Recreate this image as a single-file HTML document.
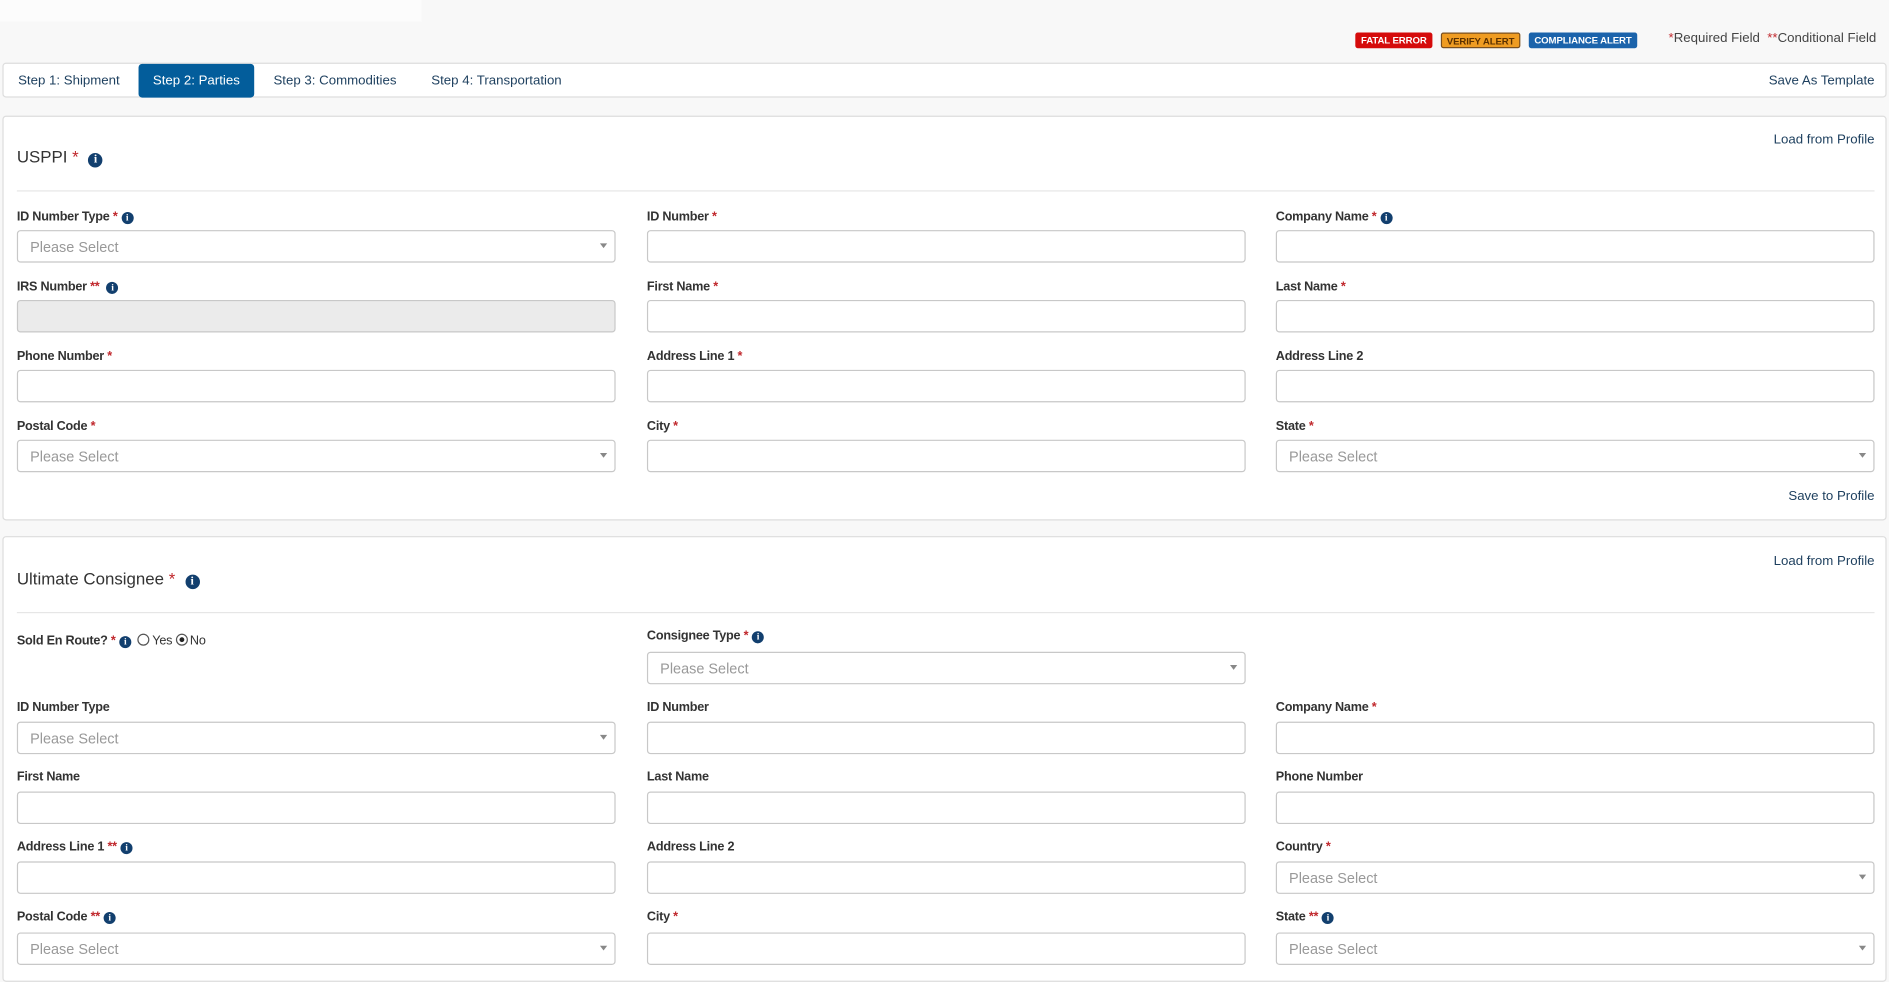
<!DOCTYPE html>
<html><head><meta charset="utf-8"><style>
html,body{margin:0;padding:0;background:#f8f8f8;overflow:hidden}
#w{position:absolute;left:0;top:0;width:1568px;height:803px;transform:scale(1.20472);transform-origin:0 0;font-family:"Liberation Sans",sans-serif;color:#333}
.a{position:absolute}
.badge{position:absolute;top:27px;height:13px;font-size:8px;font-weight:bold;color:#fff;line-height:13px;text-align:center;border-radius:2px;letter-spacing:-.1px}
.tabs{position:absolute;left:2px;top:52px;width:1564px;height:29px;background:#fff;border:1px solid #ddd;border-radius:3px;box-sizing:border-box}
.tab{position:absolute;top:0;height:28px;line-height:28px;font-size:11px;color:#1d3f5e}
.panel{position:absolute;left:2px;width:1564px;background:#fff;border:1px solid #ddd;border-radius:3px;box-sizing:border-box}
.lnk{position:absolute;right:9px;font-size:11px;color:#1d3f5e}
.title{position:absolute;left:11px;font-size:14px;color:#333}
.hr{position:absolute;left:11px;right:9px;height:1px;background:#e6e6e6}
.r{color:#c0282d}
.lb{position:absolute;font-size:10.5px;font-weight:bold;color:#333;letter-spacing:-.2px;white-space:nowrap}
.in{position:absolute;width:497px;height:27px;border:1px solid #c8c8c8;border-radius:3px;box-sizing:border-box;background:#fff}
.in.g{background:#ebebeb}
.in .ph{position:absolute;left:10px;top:6px;font-size:12px;color:#999}
.in .ar{position:absolute;right:6px;top:10px;width:0;height:0;border-left:3px solid transparent;border-right:3px solid transparent;border-top:4px solid #888}
.i{display:inline-block;width:10px;height:10px;border-radius:50%;background:#123f6e;color:#fff;font-size:8px;font-weight:bold;line-height:10px;text-align:center;font-family:"Liberation Serif",serif;vertical-align:0;margin-left:3px}
.i.big{width:12px;height:12px;line-height:12px;font-size:10px;margin-left:8px}
.rad{display:inline-block;width:8px;height:8px;border:1px solid #555;border-radius:50%;vertical-align:-1px;margin:0 2px 0 0;position:relative}
</style></head><body><div id="w">
<div class="a" style="left:0;top:0;width:350px;height:18px;background:#fcfcfc"></div>
<div class="badge" style="left:1125px;width:64px;background:#d50b0b">FATAL ERROR</div>
<div class="badge" style="left:1196px;width:66px;background:#ef9c22;color:#5a3000;border:1px solid #7a5020;box-sizing:border-box">VERIFY ALERT</div>
<div class="badge" style="left:1269px;width:90px;background:#1b63ab">COMPLIANCE ALERT</div>
<div class="a" style="left:1385px;top:26px;font-size:11px;color:#444;white-space:nowrap"><span class="r">*</span>Required Field &nbsp;<span class="r">**</span>Conditional Field</div>
<div class="tabs">
<div class="tab" style="left:12px">Step 1: Shipment</div>
<div class="tab" style="left:112px;top:0;width:96px;background:#035d9b;color:#fff;text-align:center;border-radius:3px">Step 2: Parties</div>
<div class="tab" style="left:224px">Step 3: Commodities</div>
<div class="tab" style="left:355px">Step 4: Transportation</div>
<div class="tab" style="right:9px">Save As Template</div>
</div>

<div class="panel" style="top:96px;height:336px">
<div class="lnk" style="top:13px">Load from Profile</div>
<div class="title" style="top:25px">USPPI <span class="r">*</span><span class="i big">i</span></div>
<div class="hr" style="top:61px"></div>
<div class="lb" style="left:11px;top:77px">ID Number Type <span class="r">*</span><span class="i">i</span></div>
<div class="in" style="left:11px;top:94px"><span class="ph">Please Select</span><span class="ar"></span></div>
<div class="lb" style="left:534px;top:77px">ID Number <span class="r">*</span></div>
<div class="in" style="left:534px;top:94px"></div>
<div class="lb" style="left:1056px;top:77px">Company Name <span class="r">*</span><span class="i">i</span></div>
<div class="in" style="left:1056px;top:94px"></div>
<div class="lb" style="left:11px;top:135px">IRS Number <span class="r">**</span> <span class="i">i</span></div>
<div class="in g" style="left:11px;top:152px"></div>
<div class="lb" style="left:534px;top:135px">First Name <span class="r">*</span></div>
<div class="in" style="left:534px;top:152px"></div>
<div class="lb" style="left:1056px;top:135px">Last Name <span class="r">*</span></div>
<div class="in" style="left:1056px;top:152px"></div>
<div class="lb" style="left:11px;top:193px">Phone Number <span class="r">*</span></div>
<div class="in" style="left:11px;top:210px"></div>
<div class="lb" style="left:534px;top:193px">Address Line 1 <span class="r">*</span></div>
<div class="in" style="left:534px;top:210px"></div>
<div class="lb" style="left:1056px;top:193px">Address Line 2</div>
<div class="in" style="left:1056px;top:210px"></div>
<div class="lb" style="left:11px;top:251px">Postal Code <span class="r">*</span></div>
<div class="in" style="left:11px;top:268px"><span class="ph">Please Select</span><span class="ar"></span></div>
<div class="lb" style="left:534px;top:251px">City <span class="r">*</span></div>
<div class="in" style="left:534px;top:268px"></div>
<div class="lb" style="left:1056px;top:251px">State <span class="r">*</span></div>
<div class="in" style="left:1056px;top:268px"><span class="ph">Please Select</span><span class="ar"></span></div>
<div class="lnk" style="top:309px">Save to Profile</div>
</div>

<div class="panel" style="top:445px;height:370px">
<div class="lnk" style="top:14px">Load from Profile</div>
<div class="title" style="top:26px">Ultimate Consignee <span class="r">*</span><span class="i big">i</span></div>
<div class="hr" style="top:62px"></div>
<div class="lb" style="left:11px;top:80px">Sold En Route? <span class="r">*</span><span class="i">i</span> &nbsp;<span style="font-weight:normal"><span class="rad"></span>Yes <span class="rad"><span style="position:absolute;left:2px;top:2px;width:4px;height:4px;border-radius:50%;background:#222"></span></span>No</span></div>
<div class="lb" style="left:534px;top:76px">Consignee Type <span class="r">*</span><span class="i">i</span></div>
<div class="in" style="left:534px;top:95px"><span class="ph">Please Select</span><span class="ar"></span></div>
<div class="lb" style="left:11px;top:135px">ID Number Type</div>
<div class="in" style="left:11px;top:153px"><span class="ph">Please Select</span><span class="ar"></span></div>
<div class="lb" style="left:534px;top:135px">ID Number</div>
<div class="in" style="left:534px;top:153px"></div>
<div class="lb" style="left:1056px;top:135px">Company Name <span class="r">*</span></div>
<div class="in" style="left:1056px;top:153px"></div>
<div class="lb" style="left:11px;top:193px">First Name</div>
<div class="in" style="left:11px;top:211px"></div>
<div class="lb" style="left:534px;top:193px">Last Name</div>
<div class="in" style="left:534px;top:211px"></div>
<div class="lb" style="left:1056px;top:193px">Phone Number</div>
<div class="in" style="left:1056px;top:211px"></div>
<div class="lb" style="left:11px;top:251px">Address Line 1 <span class="r">**</span><span class="i">i</span></div>
<div class="in" style="left:11px;top:269px"></div>
<div class="lb" style="left:534px;top:251px">Address Line 2</div>
<div class="in" style="left:534px;top:269px"></div>
<div class="lb" style="left:1056px;top:251px">Country <span class="r">*</span></div>
<div class="in" style="left:1056px;top:269px"><span class="ph">Please Select</span><span class="ar"></span></div>
<div class="lb" style="left:11px;top:309px">Postal Code <span class="r">**</span><span class="i">i</span></div>
<div class="in" style="left:11px;top:328px"><span class="ph">Please Select</span><span class="ar"></span></div>
<div class="lb" style="left:534px;top:309px">City <span class="r">*</span></div>
<div class="in" style="left:534px;top:328px"></div>
<div class="lb" style="left:1056px;top:309px">State <span class="r">**</span><span class="i">i</span></div>
<div class="in" style="left:1056px;top:328px"><span class="ph">Please Select</span><span class="ar"></span></div>
</div>
</div></body></html>
